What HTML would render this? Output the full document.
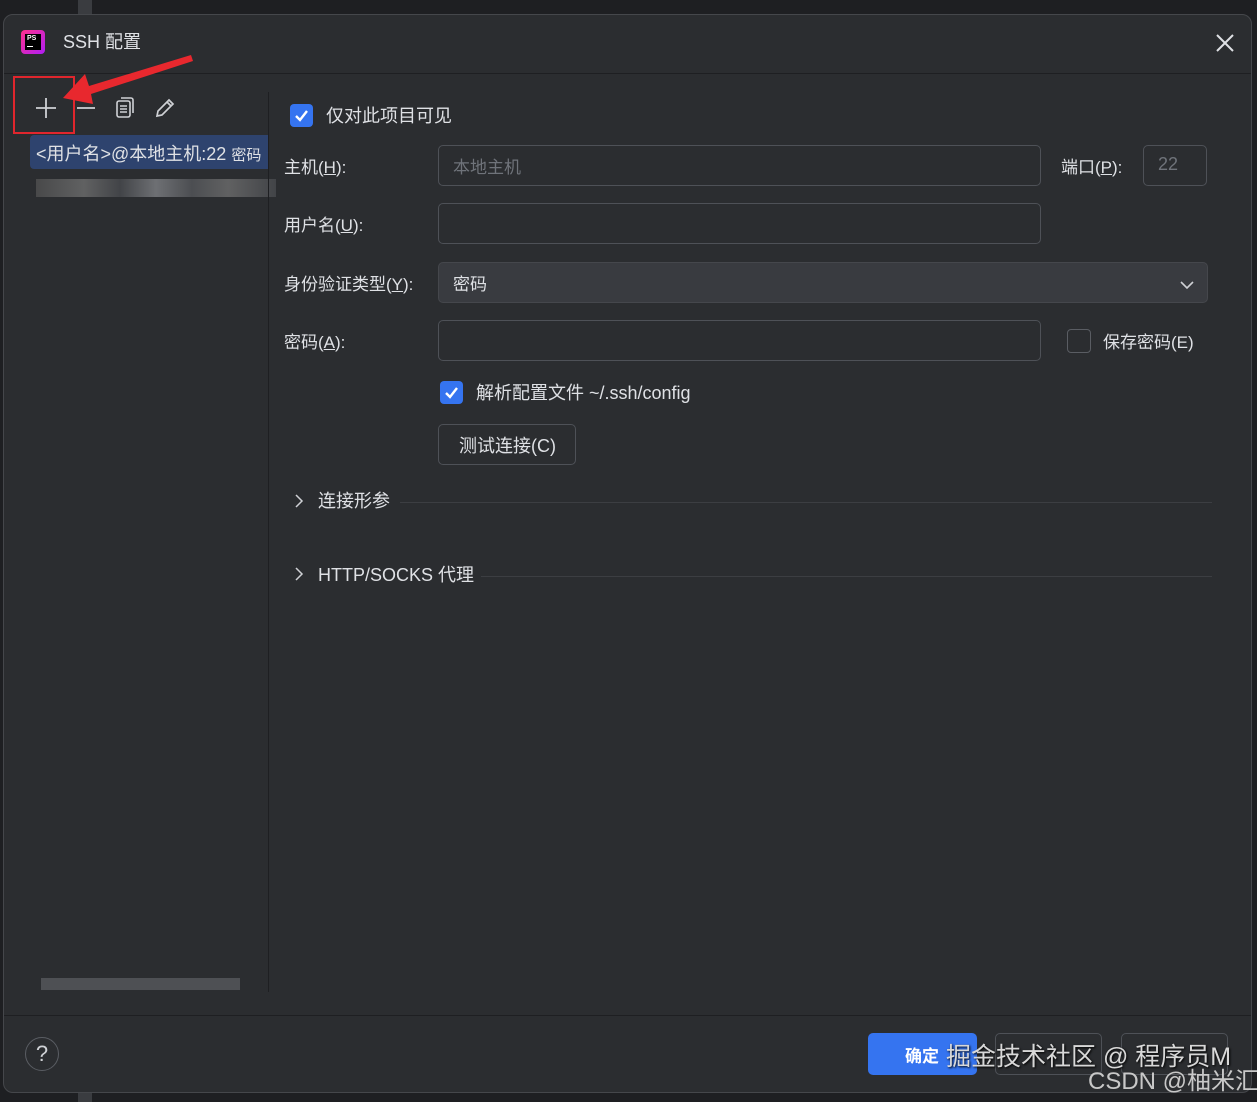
<!DOCTYPE html>
<html><head><meta charset="utf-8"><style>
*{box-sizing:border-box;margin:0;padding:0}
body{width:1257px;height:1102px;background:#1e1f22;position:relative;overflow:hidden;font-family:"Liberation Sans","Noto Sans CJK SC",sans-serif;color:#dfe1e5;font-size:17px}
.a{position:absolute}
.dlg{left:3px;top:14px;width:1249px;height:1079px;background:#2b2d30;border:1px solid #45474b;border-radius:10px}
.inp{position:absolute;border:1px solid #4e5157;border-radius:5px;height:41px;background:#2b2d30}
.lbl{position:absolute;font-size:17px;color:#dfe1e5;white-space:nowrap;margin-top:-3px}
.cb{position:absolute;width:23px;height:23px;border-radius:4px;background:#3574f0}
.cb svg{position:absolute;left:3px;top:3px}
u{text-decoration:underline}
</style></head><body>
<div class="a" style="left:78px;top:0;width:14px;height:14px;background:#3a3c40"></div>
<div class="a" style="left:78px;top:1092px;width:14px;height:10px;background:#3a3c40"></div>
<div class="a dlg"></div>
<div class="a" style="left:21px;top:30px;width:24px;height:24px;border-radius:4px;background:linear-gradient(135deg,#ff318c,#af1df5)"></div>
<div class="a" style="left:25px;top:34px;width:16px;height:16px;background:#000;color:#fff;font-size:7px;font-weight:bold;padding:1px 2px">PS<div style="width:6px;height:1px;background:#fff;margin-top:4px"></div></div>
<div class="lbl" style="left:63px;top:31px;font-size:18px">SSH 配置</div>
<svg class="a" style="left:1215px;top:33px" width="20" height="20"><path d="M2 2L18 18M18 2L2 18" stroke="#dfe1e5" stroke-width="2"/></svg>
<div class="a" style="left:4px;top:73px;width:1247px;height:1px;background:#1e1f22"></div>
<svg class="a" style="left:34px;top:96px" width="24" height="24"><path d="M12 2V22M2 12H22" stroke="#cfd1d5" stroke-width="1.8"/></svg>
<svg class="a" style="left:75px;top:96px" width="24" height="24"><path d="M2 12H20" stroke="#cfd1d5" stroke-width="1.8"/></svg>
<svg class="a" style="left:114px;top:96px" width="22" height="24"><rect x="3" y="5" width="13" height="16" rx="2" fill="none" stroke="#cfd1d5" stroke-width="1.6"/><path d="M7 2H17a2 2 0 0 1 2 2V17" fill="none" stroke="#cfd1d5" stroke-width="1.6"/><path d="M6 10H13M6 13H13M6 16H13" stroke="#cfd1d5" stroke-width="1.4"/></svg>
<svg class="a" style="left:153px;top:96px" width="24" height="24"><path d="M4 20L5 15L16 4L20 8L9 19Z M14 6L18 10" fill="none" stroke="#cfd1d5" stroke-width="1.7"/></svg>
<div class="a" style="left:13px;top:76px;width:62px;height:58px;border:2px solid #e0262d"></div>
<svg class="a" style="left:55px;top:52px" width="140" height="60"><path d="M136 3L34 34L30 22L8 46L38 52L36 42L138 9Z" fill="#e8282e"/></svg>
<div class="a" style="left:30px;top:135px;width:238px;height:34px;background:#2e436e;border-radius:4px 0 0 4px"></div>
<div class="lbl" style="left:36px;top:143px;font-size:18px">&lt;用户名&gt;@本地主机:22 <span style="font-size:15px">密码</span></div>
<div class="a" style="left:36px;top:179px;width:240px;height:18px;background:linear-gradient(90deg,#555 0,#777 20%,#4c4e52 35%,#8a8c90 50%,#5a5c60 65%,#777 80%,#4c4e52 100%);opacity:.7"></div>
<div class="a" style="left:268px;top:92px;width:1px;height:900px;background:#1e1f22"></div>
<div class="a" style="left:41px;top:978px;width:199px;height:12px;background:#4e5054"></div>
<div class="cb" style="left:290px;top:104px"><svg width="17" height="17"><path d="M3 9L7 13L14 4" fill="none" stroke="#fff" stroke-width="2.4"/></svg></div>
<div class="lbl" style="left:326px;top:105px;font-size:18px">仅对此项目可见</div>
<div class="lbl" style="left:284px;top:156px">主机(<u>H</u>):</div>
<div class="inp" style="left:438px;top:145px;width:603px"></div>
<div class="lbl" style="left:453px;top:156px;color:#6f737a">本地主机</div>
<div class="lbl" style="left:1061px;top:156px">端口(<u>P</u>):</div>
<div class="inp" style="left:1143px;top:145px;width:64px"></div>
<div class="lbl" style="left:1158px;top:157px;color:#6f737a;font-size:18px">22</div>
<div class="lbl" style="left:284px;top:214px">用户名(<u>U</u>):</div>
<div class="inp" style="left:438px;top:203px;width:603px"></div>
<div class="lbl" style="left:284px;top:273px">身份验证类型(<u>Y</u>):</div>
<div class="inp" style="left:438px;top:262px;width:770px;background:#393b40;border-color:#45474c"></div>
<div class="lbl" style="left:453px;top:273px">密码</div>
<svg class="a" style="left:1179px;top:279px" width="16" height="12"><path d="M2 3L8 9L14 3" fill="none" stroke="#cfd1d5" stroke-width="1.6"/></svg>
<div class="lbl" style="left:284px;top:331px">密码(<u>A</u>):</div>
<div class="inp" style="left:438px;top:320px;width:603px"></div>
<div class="a" style="left:1067px;top:329px;width:24px;height:24px;border:1px solid #5a5d63;border-radius:4px"></div>
<div class="lbl" style="left:1103px;top:331px">保存密码(E)</div>
<div class="cb" style="left:440px;top:381px"><svg width="17" height="17"><path d="M3 9L7 13L14 4" fill="none" stroke="#fff" stroke-width="2.4"/></svg></div>
<div class="lbl" style="left:476px;top:382px;font-size:18px">解析配置文件 ~/.ssh/config</div>
<div class="inp" style="left:438px;top:424px;width:138px"></div>
<div class="lbl" style="left:459px;top:435px;font-size:18px">测试连接(C)</div>
<svg class="a" style="left:293px;top:493px" width="12" height="16"><path d="M3 2L9 8L3 14" fill="none" stroke="#cfd1d5" stroke-width="1.5"/></svg>
<div class="lbl" style="left:318px;top:490px;font-size:18px">连接形参</div>
<div class="a" style="left:400px;top:502px;width:812px;height:1px;background:#3c3e42"></div>
<svg class="a" style="left:293px;top:566px" width="12" height="16"><path d="M3 2L9 8L3 14" fill="none" stroke="#cfd1d5" stroke-width="1.5"/></svg>
<div class="lbl" style="left:318px;top:564px;font-size:18px">HTTP/SOCKS 代理</div>
<div class="a" style="left:481px;top:576px;width:731px;height:1px;background:#3c3e42"></div>
<div class="a" style="left:4px;top:1015px;width:1247px;height:1px;background:#1e1f22"></div>
<div class="a" style="left:25px;top:1037px;width:34px;height:34px;border:1px solid #5a5d63;border-radius:50%;text-align:center;line-height:32px;font-size:22px;color:#cfd1d5">?</div>
<div class="a" style="left:868px;top:1033px;width:109px;height:42px;background:#3574f0;border-radius:5px"></div>
<div class="lbl" style="left:905px;top:1045px;font-weight:bold;color:#fff">确定</div>
<div class="inp" style="left:995px;top:1033px;width:107px;height:42px"></div>
<div class="inp" style="left:1121px;top:1033px;width:107px;height:42px"></div>
<div class="lbl" style="left:946px;top:1040px;font-size:25px;color:#d8d8d8;text-shadow:1px 1px 2px #000">掘金技术社区 @ 程序员M</div>
<div class="lbl" style="left:1088px;top:1064px;font-size:24px;color:#c8c8c8">CSDN @柚米汇</div>
</body></html>
